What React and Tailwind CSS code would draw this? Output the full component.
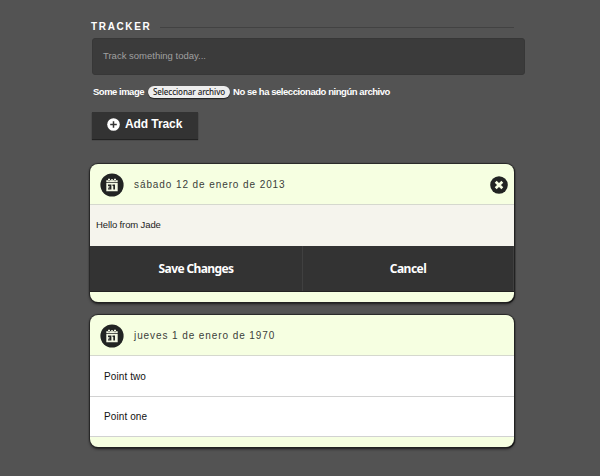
import React from 'react';

function CalendarBadge() {
  return (
    <svg className="h-6 w-6 shrink-0" viewBox="0 0 24 24">
      <circle cx="12" cy="12" r="11.6" fill="#222423" />
      <path d="M6.3 7.2h11.4v2H6.3zM6.3 10h11.4v8.3H6.3z" fill="#f4f8e4" />
      <path d="M8 5.7h2v2.5H8zM14 5.7h2v2.5h-2zM11 6.3h2v1h-2z" fill="#f4f8e4" />
      <path d="M8.6 7h.9v1.3h-.9zM14.6 7h.9v1.3h-.9z" fill="#222423" />
      <path d="M8 11.6h3.4v5H8v-1.4h1.8v-.5H8.6v-1.1h1.2v-.6H8zM12.5 11.6h2.5v5h-1.7v-3.6h-.8z" fill="#222423" />
    </svg>
  );
}

function CloseIcon() {
  return (
    <svg className="h-[18px] w-[18px]" viewBox="0 0 18 18">
      <circle cx="9" cy="9" r="8.8" fill="#222423" />
      <path d="M5.7 5.7l6.6 6.6M12.3 5.7l-6.6 6.6" stroke="#f8ffe4" strokeWidth="2.7" />
    </svg>
  );
}

function PlusIcon() {
  return (
    <svg className="h-[13px] w-[13px]" viewBox="0 0 13 13">
      <circle cx="6.5" cy="6.5" r="6.3" fill="#fff" />
      <path d="M6.5 3.2v6.6M3.2 6.5h6.6" stroke="#333" strokeWidth="1.5" />
    </svg>
  );
}

function CardHeader({ date, closable }) {
  return (
    <header className="flex h-[41px] items-center border-b border-[#d5d8ce] pl-[10px] pr-[6px] pt-[2px]">
      <CalendarBadge />
      <h2 className="ml-[10px] whitespace-nowrap text-[10px] leading-3 tracking-[0.91px] text-[#3b403a]">{date}</h2>
      {closable && (
        <button className="ml-auto" aria-label="Cerrar">
          <CloseIcon />
        </button>
      )}
    </header>
  );
}

const cardClass =
  'w-[424px] overflow-hidden rounded-[8px] bg-[#f6ffe1] shadow-[0_0_1px_1px_#262626,1px_1px_1px_#000,0_2px_3px_#222]';

export default function App() {
  return (
    <main className="h-[476px] w-[600px] overflow-hidden bg-[#535353] pl-[90px] pt-[21px] font-['Liberation_Sans',Arial,sans-serif]">
      <div className="flex h-3 w-[424px] items-center pl-px">
        <h1 className="w-[69px] whitespace-nowrap text-[10px] font-bold leading-3 tracking-[1.65px] text-white">TRACKER</h1>
        <div className="h-px flex-1 bg-[#424242]" />
      </div>

      <div className="ml-[2px] mt-[5px] flex h-[37px] w-[433px] items-center rounded-[3px] border border-[#373737] bg-[#3b3b3b] pl-[10px]">
        <span className="text-[9.5px] tracking-[0px] text-[#a0a0a0]">Track something today...</span>
      </div>

      <div className="ml-[3px] mt-[11px] flex h-3 items-center whitespace-nowrap text-[9.5px] font-bold leading-3 text-white">
        <span className="w-[55px] tracking-[-0.5px]">Some image</span>
        <button className="flex h-3 w-[82px] items-center justify-center rounded-full bg-[#ededed] font-['Noto_Sans',sans-serif] text-[8px] font-medium leading-3 tracking-[-0.08px] text-[#222] shadow-[0_1px_1px_#222]">
          Seleccionar archivo
        </button>
        <span className="ml-[3px] tracking-[-0.45px]">No se ha seleccionado ningún archivo</span>
      </div>

      <button className="ml-[2px] mt-[14px] flex h-[27px] w-[106px] items-center bg-[#333] pb-[3px] pl-[15px] text-white shadow-[0_1px_1px_#222]">
        <PlusIcon />
        <span className="ml-[5px] whitespace-nowrap text-[12px] font-bold leading-4 tracking-[-0.08px]">Add Track</span>
      </button>

      <section className={`${cardClass} mt-[25px] h-[138px]`}>
        <CardHeader date="sábado 12 de enero de 2013" closable />
        <div className="flex h-[41px] items-center bg-[#f5f4ed] pl-[6px] text-[9.5px] tracking-[-0.12px] text-[#222]">
          Hello from Jade
        </div>
        <div className="grid h-[46px] grid-cols-[213px_211px] border-b border-[#222] bg-[#333] font-['Noto_Sans',sans-serif] text-[12px] font-bold text-white">
          <button className="border-r border-[#404040] text-center tracking-[-0.62px]">Save Changes</button>
          <button className="border-r border-[#404040] text-center tracking-[-0.5px]">Cancel</button>
        </div>
      </section>

      <section className={`${cardClass} mt-[13px] h-[132px]`}>
        <CardHeader date="jueves 1 de enero de 1970" />
        <div className="flex h-[41px] items-center border-b border-[#d2d2d2] bg-white pl-[14px] text-[10px] tracking-[0.1px] text-[#111]">
          Point two
        </div>
        <div className="flex h-10 items-center border-b border-[#d2d2d2] bg-white pl-[14px] text-[10px] tracking-[0.1px] text-[#111]">
          Point one
        </div>
      </section>
    </main>
  );
}
